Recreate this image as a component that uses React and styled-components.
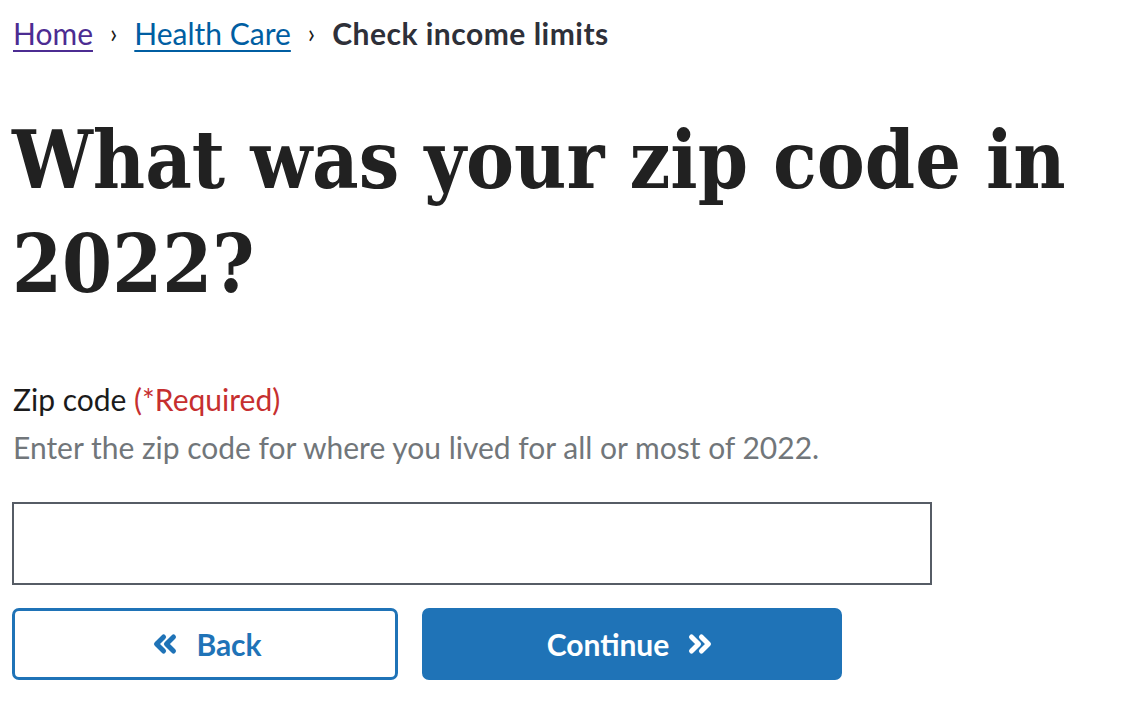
import styled, { createGlobalStyle } from "styled-components";
import { ChevronsLeft, ChevronsRight } from "lucide-react";

const GlobalStyle = createGlobalStyle`
  body {
    margin: 0;
    background: #fff;
    font-family: Lato, "Noto Sans", sans-serif;
    color: #1b1b1b;
  }
`;

const Page = styled.main`
  padding: 14px 0 0 12px;
  width: 940px;
`;

const Breadcrumbs = styled.nav`
  display: flex;
  align-items: center;
  gap: 15px;
  font-size: 30px;
  line-height: 38px;
  padding-left: 1px;
`;

const Crumb = styled.a`
  color: ${(p) => (p.$visited ? "#4c2c92" : "#005ea2")};
  text-decoration: underline;
  text-underline-offset: 5px;
  text-decoration-thickness: 2px;
`;

const Sep = styled.span`
  color: #1b1b1b;
  font-size: 26px;
  margin: 0 2px;
`;

const Current = styled.span`
  font-weight: 700;
  color: #2e3039;
  letter-spacing: 0.5px;
`;

const Title = styled.h1`
  font-family: "DejaVu Serif", serif;
  font-stretch: condensed;
  font-weight: 700;
  font-size: 80px;
  line-height: 104px;
  color: #212121;
  margin: 56px 0 0 0;
  width: 1120px;
`;

const Field = styled.div`
  display: flex;
  flex-direction: column;
  margin-top: 63px;
  padding-left: 1px;
`;

const Label = styled.label`
  font-size: 30px;
  line-height: 40px;
  color: #1b1b1b;
`;

const Required = styled.span`
  color: #c62f2f;
`;

const Hint = styled.div`
  font-size: 30px;
  line-height: 40px;
  margin-top: 8px;
  color: #71767a;
`;

const Input = styled.input`
  box-sizing: border-box;
  width: 920px;
  height: 83px;
  margin: 35px 0 0 -1px;
  border: 2px solid #565c65;
  border-radius: 0;
  font: inherit;
  font-size: 30px;
  padding: 0 16px;
`;

const Actions = styled.div`
  display: flex;
  gap: 24px;
  margin-top: 23px;
`;

const Button = styled.button`
  box-sizing: border-box;
  display: flex;
  align-items: center;
  justify-content: center;
  gap: 14px;
  width: ${(p) => p.$w}px;
  height: 72px;
  border-radius: 7px;
  font-family: Lato, "Noto Sans", sans-serif;
  font-weight: 700;
  font-size: 30px;
  cursor: pointer;
  border: 3px solid #1f73b7;
  background: ${(p) => (p.$primary ? "#1f73b7" : "#fff")};
  color: ${(p) => (p.$primary ? "#fff" : "#1f73b7")};
`;

export default function App() {
  return (
    <>
      <GlobalStyle />
      <Page>
        <Breadcrumbs aria-label="Breadcrumbs">
          <Crumb href="#" $visited>Home</Crumb>
          <Sep>›</Sep>
          <Crumb href="#">Health Care</Crumb>
          <Sep>›</Sep>
          <Current>Check income limits</Current>
        </Breadcrumbs>
        <Title>What was your zip code in 2022?</Title>
        <Field>
          <Label htmlFor="zip">
            Zip code <Required>(*Required)</Required>
          </Label>
          <Hint>Enter the zip code for where you lived for all or most of 2022.</Hint>
          <Input id="zip" type="text" inputMode="numeric" />
        </Field>
        <Actions>
          <Button $w={386}>
            <ChevronsLeft size={34} strokeWidth={3.5} />
            Back
          </Button>
          <Button $w={420} $primary>
            Continue
            <ChevronsRight size={34} strokeWidth={3.5} />
          </Button>
        </Actions>
      </Page>
    </>
  );
}
